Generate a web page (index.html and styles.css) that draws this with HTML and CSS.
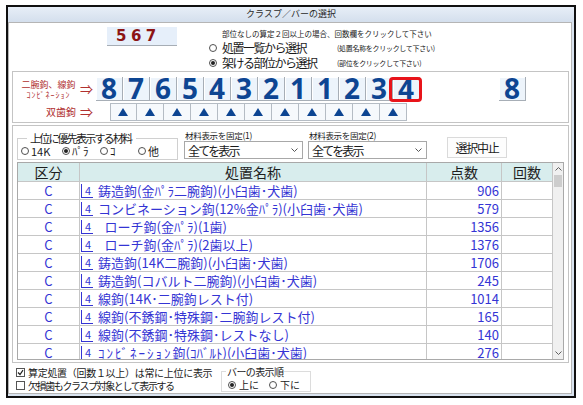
FILE: index.html
```html
<!DOCTYPE html>
<html lang="ja">
<head>
    <meta charset="UTF-8">
    <title>クラスプ／バーの選択</title>
    <link rel="stylesheet" href="styles.css">
</head>
<body>
    <div class="window">
        <div class="titlebar">クラスプ／バーの選択</div>

        <div class="panel">
            <!-- 件数と選択モード -->
            <div class="top">
                <div class="count">567</div>
                <div class="mode">
                    <div class="hint">部位なしの算定２回以上の場合、回数欄をクリックして下さい</div>
                    <div class="mode-row">
                        <span class="radio"></span>
                        <span class="mode-label">処置一覧から選択</span>
                        <span class="mode-note">(処置名称をクリックして下さい)</span>
                    </div>
                    <div class="mode-row">
                        <span class="radio on"></span>
                        <span class="mode-label">架ける部位から選択</span>
                        <span class="mode-note">(部位をクリックして下さい)</span>
                    </div>
                </div>
            </div>

            <!-- 歯式 -->
            <div class="group teeth">
                <div class="teeth-row">
                    <div class="teeth-label">
                        <span>二腕鉤、線鉤</span>
                        <span class="kana">ｺﾝﾋﾞﾈｰｼｮﾝ</span>
                    </div>
                    <div class="arrow">⇒</div>
                    <div class="tooth">8</div>
                    <div class="tooth">7</div>
                    <div class="tooth">6</div>
                    <div class="tooth">5</div>
                    <div class="tooth">4</div>
                    <div class="tooth">3</div>
                    <div class="tooth">2</div>
                    <div class="tooth">1</div>
                    <div class="tooth">1</div>
                    <div class="tooth">2</div>
                    <div class="tooth">3</div>
                    <div class="tooth current">4</div>
                    <div class="tooth single">8</div>
                </div>
                <div class="teeth-row bar-row">
                    <div class="teeth-label right">双歯鉤</div>
                    <div class="arrow">⇒</div>
                    <div class="bars">
                        <div class="bar"></div>
                        <div class="bar"></div>
                        <div class="bar"></div>
                        <div class="bar"></div>
                        <div class="bar"></div>
                        <div class="bar"></div>
                        <div class="bar"></div>
                        <div class="bar"></div>
                        <div class="bar"></div>
                        <div class="bar"></div>
                        <div class="bar"></div>
                    </div>
                </div>
            </div>

            <!-- 材料と処置一覧 -->
            <div class="group list">
                <div class="filters">
                    <fieldset class="prio">
                        <legend>上位に優先表示する材料</legend>
                        <div class="opts">
                            <span class="opt"><span class="radio"></span>14K</span>
                            <span class="opt"><span class="radio on"></span>ﾊﾟﾗ</span>
                            <span class="opt"><span class="radio"></span>ｺ</span>
                            <span class="opt"><span class="radio"></span>他</span>
                        </div>
                    </fieldset>
                    <div class="fix">
                        <div class="fix-label">材料表示を固定(1)</div>
                        <div class="select">
                            <span>全てを表示</span>
                            <svg width="7" height="4" viewBox="0 0 7 4"><path d="M0.5 0.5 L3.5 3.5 L6.5 0.5" fill="none" stroke="#555" stroke-width="1"/></svg>
                        </div>
                    </div>
                    <div class="fix">
                        <div class="fix-label">材料表示を固定(2)</div>
                        <div class="select">
                            <span>全てを表示</span>
                            <svg width="7" height="4" viewBox="0 0 7 4"><path d="M0.5 0.5 L3.5 3.5 L6.5 0.5" fill="none" stroke="#555" stroke-width="1"/></svg>
                        </div>
                    </div>
                    <button class="cancel">選択中止</button>
                </div>

                <div class="grid">
                    <table>
                        <thead>
                            <tr>
                                <th class="c-kind">区分</th>
                                <th class="c-name">処置名称</th>
                                <th class="c-pts">点数</th>
                                <th class="c-cnt">回数</th>
                            </tr>
                        </thead>
                        <tbody>
                            <tr><td class="kind">C</td><td class="name"><span class="mark">4</span>鋳造鉤(金ﾊﾟﾗ二腕鉤)(小臼歯･犬歯)</td><td class="pts">906</td><td></td></tr>
                            <tr><td class="kind">C</td><td class="name"><span class="mark">4</span>コンビネーション鉤(12%金ﾊﾟﾗ)(小臼歯･犬歯)</td><td class="pts">579</td><td></td></tr>
                            <tr><td class="kind">C</td><td class="name"><span class="mark">4</span>&ensp;ローチ鉤(金ﾊﾟﾗ)(1歯)</td><td class="pts">1356</td><td></td></tr>
                            <tr><td class="kind">C</td><td class="name"><span class="mark">4</span>&ensp;ローチ鉤(金ﾊﾟﾗ)(2歯以上)</td><td class="pts">1376</td><td></td></tr>
                            <tr><td class="kind">C</td><td class="name"><span class="mark">4</span>鋳造鉤(14K二腕鉤)(小臼歯･犬歯)</td><td class="pts">1706</td><td></td></tr>
                            <tr><td class="kind">C</td><td class="name"><span class="mark">4</span>鋳造鉤(コバルト二腕鉤)(小臼歯･犬歯)</td><td class="pts">245</td><td></td></tr>
                            <tr><td class="kind">C</td><td class="name"><span class="mark">4</span>線鉤(14K･二腕鉤レスト付)</td><td class="pts">1014</td><td></td></tr>
                            <tr><td class="kind">C</td><td class="name"><span class="mark">4</span>線鉤(不銹鋼･特殊鋼･二腕鉤レスト付)</td><td class="pts">165</td><td></td></tr>
                            <tr><td class="kind">C</td><td class="name"><span class="mark">4</span>線鉤(不銹鋼･特殊鋼･レストなし)</td><td class="pts">140</td><td></td></tr>
                            <tr><td class="kind">C</td><td class="name"><span class="mark">4</span><span class="hw">ｺﾝﾋﾞﾈｰｼｮﾝ</span>鉤(ｺﾊﾞﾙﾄ)(小臼歯･犬歯)</td><td class="pts">276</td><td></td></tr>
                        </tbody>
                    </table>
                    <div class="scroll">
                        <svg class="arr" width="7" height="4" viewBox="0 0 7 4"><path d="M0.5 3.5 L3.5 0.5 L6.5 3.5" fill="none" stroke="#606060" stroke-width="1"/></svg>
                        <div class="thumb"></div>
                        <div class="track"></div>
                        <svg class="arr" width="7" height="4" viewBox="0 0 7 4"><path d="M0.5 0.5 L3.5 3.5 L6.5 0.5" fill="none" stroke="#606060" stroke-width="1"/></svg>
                    </div>
                </div>
            </div>

            <!-- 表示オプション -->
            <div class="bottom">
                <div class="checks">
                    <div class="check">
                        <span class="box"><svg width="7" height="7" viewBox="0 0 7 7"><path d="M1 3.5 L3 5.5 L6 1.2" fill="none" stroke="#222" stroke-width="1.2"/></svg></span>
                        算定処置（回数１以上）は常に上位に表示
                    </div>
                    <div class="check"><span class="box"></span>欠損歯もクラスプ対象として表示する</div>
                </div>
                <fieldset class="order">
                    <legend>バーの表示順</legend>
                    <div class="opts">
                        <span class="opt"><span class="radio on"></span>上に</span>
                        <span class="opt"><span class="radio"></span>下に</span>
                    </div>
                </fieldset>
            </div>
        </div>
    </div>
</body>
</html>
```

FILE: styles.css
```css
:root {
    --frame: #d9e3ef;
    --line: #c4c4c4;
    --tooth: #0d4592;
    --label-red: #b03030;
    --link: #3434d4;
}

* {
    box-sizing: border-box;
}

body {
    margin: 0;
    background: #fff;
    color: #1a1a1a;
    font-family: "Noto Sans CJK JP", "Noto Sans", sans-serif;
}

.window {
    margin: 5px 0 0 6px;
    width: 570px;
    height: 393px;
    border: 2px solid #101010;
    background: var(--frame);
    display: flex;
    flex-direction: column;
}

.titlebar {
    height: 15px;
    line-height: 14px;
    text-align: center;
    font-size: 9px;
    color: #2a2a2a;
    background: linear-gradient(#e7eef7, #d4dfed);
}

.panel {
    flex: 1;
    margin: 0 2px 2px 0;
    background: #fff;
    border: 1px solid #b5b5b5;
    display: flex;
    flex-direction: column;
}

/* top */
.top {
    height: 48px;
    display: flex;
    flex-shrink: 0;
}

.count {
    margin: 4px 0 0 98px;
    width: 70px;
    height: 19px;
    padding-left: 9px;
    border-bottom: 1px solid #a6adb5;
    background: #e6effa;
    color: #8c1414;
    font: bold 15px/19px "DejaVu Sans", sans-serif;
    letter-spacing: 4.5px;
}

.mode {
    margin-left: 30px;
}

.hint {
    margin-top: 4px;
    padding-left: 15px;
    font-size: 7.5px;
    line-height: 13px;
}

.mode-row {
    display: flex;
    align-items: center;
    height: 15px;
}

.mode-row .radio {
    margin-left: 2px;
}

.mode-label {
    width: 115px;
    margin-left: 5px;
    font-size: 12px;
    letter-spacing: -1.5px;
    line-height: 15px;
}

.mode-note {
    font-size: 7px;
    letter-spacing: -0.3px;
}

.radio {
    width: 8px;
    height: 8px;
    border: 1px solid #505050;
    border-radius: 50%;
    background: #fff;
    display: inline-flex;
    align-items: center;
    justify-content: center;
    flex-shrink: 0;
}

.radio.on::after {
    content: "";
    width: 4px;
    height: 4px;
    border-radius: 50%;
    background: #222;
}

/* groups */
.group {
    margin: 0 2px 0 3px;
    border: 1px solid var(--line);
    flex-shrink: 0;
}

.teeth {
    height: 52px;
    padding-top: 5px;
}

.teeth-row {
    display: flex;
    align-items: center;
}

.bar-row {
    margin-top: 2px;
}

.teeth-label {
    width: 67px;
    padding-left: 4px;
    display: flex;
    flex-direction: column;
    align-items: center;
    color: var(--label-red);
    font-size: 9px;
    line-height: 11px;
}

.teeth-label .kana {
    font-size: 8px;
    line-height: 10px;
    letter-spacing: 1px;
}

.teeth-label.right {
    align-items: flex-end;
    padding: 0 4px 0 0;
    font-size: 10px;
    line-height: 18px;
}

.arrow {
    width: 16px;
    color: var(--label-red);
    font-size: 13px;
    line-height: 16px;
}

.tooth {
    width: 27px;
    height: 24px;
    border-right: 1px solid #a7aeb6;
    border-bottom: 1px solid #a7aeb6;
    background: #edf4fb;
    box-shadow: inset 1px 1px #fff;
    color: var(--tooth);
    font: 700 28px/22px "Open Sans", sans-serif;
    text-align: center;
}

.tooth.current {
    position: relative;
}

.tooth.current::after {
    content: "";
    position: absolute;
    top: 0;
    left: -4px;
    right: -3px;
    bottom: -2px;
    border: 3px solid #e8141a;
    border-radius: 4px;
}

.tooth.single {
    margin-left: 79px;
}

.bars {
    display: flex;
    margin-left: 13.5px;
}

.bar {
    width: 27px;
    height: 18px;
    border: 1px solid #b5bcc4;
    border-left: none;
    background: #f6f9fc;
    display: flex;
    align-items: center;
    justify-content: center;
}

.bar:first-child {
    border-left: 1px solid #b5bcc4;
}

.bar::before {
    content: "";
    border-left: 5px solid transparent;
    border-right: 5px solid transparent;
    border-bottom: 8px solid var(--tooth);
}

.list {
    margin-top: 2px;
    height: 238px;
    padding-left: 4px;
}

/* filters */
.filters {
    height: 36px;
    display: flex;
    align-items: flex-start;
}

fieldset {
    margin: 0;
    min-width: 0;
}

.prio {
    margin-top: 5px;
    width: 161px;
    height: 29px;
    padding: 0 0 2px 3px;
    border: 1px solid #d0d0d0;
}

.prio legend {
    margin-left: 6px;
    padding: 0 5px 0 3px;
    font-size: 11px;
    line-height: 14px;
    letter-spacing: -1.8px;
}

.opts {
    display: flex;
    height: 12px;
    align-items: center;
}

.opt {
    display: flex;
    align-items: center;
    font-size: 11px;
    line-height: 12px;
}

.opt .radio {
    margin-right: 2px;
}

.prio .opt {
    width: 38px;
}

.prio .opt:first-child {
    width: 41px;
}

.fix {
    margin: 4px 0 0 6px;
}

.fix + .fix {
    margin-left: 5px;
}

.fix-label {
    padding-left: 1px;
    font-size: 8.5px;
    line-height: 11px;
    letter-spacing: -0.3px;
}

.select {
    width: 119px;
    height: 18px;
    padding: 0 4px 0 3px;
    border: 1px solid #a8a8a8;
    background: #fff;
    display: flex;
    align-items: center;
    justify-content: space-between;
    font-size: 12px;
    letter-spacing: -1.8px;
}

.cancel {
    margin: 11px 0 0 20px;
    width: 60px;
    height: 21px;
    padding: 0;
    border: 1px solid #dadada;
    background: #fdfdfd;
    color: #222;
    font-family: inherit;
    font-size: 12px;
    letter-spacing: -1.2px;
}

/* list */
.grid {
    width: 547px;
    height: 198px;
    border: 1px solid #a9a9a9;
    display: flex;
    overflow: hidden;
}

table {
    width: 535px;
    table-layout: fixed;
    border-collapse: separate;
    border-spacing: 0;
    flex-shrink: 0;
    align-self: flex-start;
}

th, td {
    padding: 0;
    border-right: 1px solid #c6c6c6;
    border-bottom: 1px solid #c6c6c6;
    white-space: nowrap;
    overflow: hidden;
}

th {
    height: 19px;
    background: #d8eded;
    font-weight: normal;
    font-size: 14px;
    line-height: 18px;
    color: #1e1e1e;
    text-align: center;
}

.c-kind { width: 62px; }
.c-name { width: 347px; }
.c-pts { width: 75px; }
.c-cnt { width: 51px; }

td {
    height: 18px;
    font-size: 13px;
    line-height: 17px;
    color: var(--link);
}

.kind {
    text-align: center;
}

.name {
    padding-left: 1px;
}

.hw {
    letter-spacing: 2px;
}

.mark {
    display: inline-block;
    vertical-align: top;
    margin: 2px 5px 0 0;
    height: 14px;
    padding: 0 2px 0 3px;
    border-left: 1px solid var(--link);
    border-bottom: 1px solid var(--link);
    font-size: 11px;
    line-height: 13px;
}

.pts {
    text-align: right;
    padding-right: 2px;
}

.scroll {
    width: 10px;
    background: #f0f0f0;
    display: flex;
    flex-direction: column;
    align-items: center;
}

.scroll .arr {
    margin: 4px 0;
    flex-shrink: 0;
}

.thumb {
    width: 8px;
    height: 12px;
    background: #cdcdcd;
}

.track {
    flex: 1;
}

/* bottom */
.bottom {
    display: flex;
    height: 29px;
    padding-left: 5px;
}

.checks {
    width: 207px;
    padding-top: 3px;
}

.check {
    display: flex;
    align-items: center;
    height: 13px;
    font-size: 10px;
    letter-spacing: -0.3px;
    white-space: nowrap;
}

.check + .check {
    letter-spacing: -1.4px;
}

.box {
    width: 9px;
    height: 9px;
    margin: 0 3px 0 2px;
    border: 1px solid #555;
    background: #fff;
    display: flex;
    align-items: center;
    justify-content: center;
    flex-shrink: 0;
}

.order {
    margin-top: 2px;
    width: 90px;
    height: 27px;
    padding: 0 0 0 4px;
    border: 1px solid #dcdcdc;
}

.order legend {
    padding: 0 1px;
    font-size: 10px;
    line-height: 13px;
    letter-spacing: -0.6px;
}

.order .opts {
    height: 13px;
    padding-left: 2px;
}

.order .opt {
    width: 41px;
    font-size: 10px;
}

.order .opt .radio {
    margin-right: 3px;
}
```
